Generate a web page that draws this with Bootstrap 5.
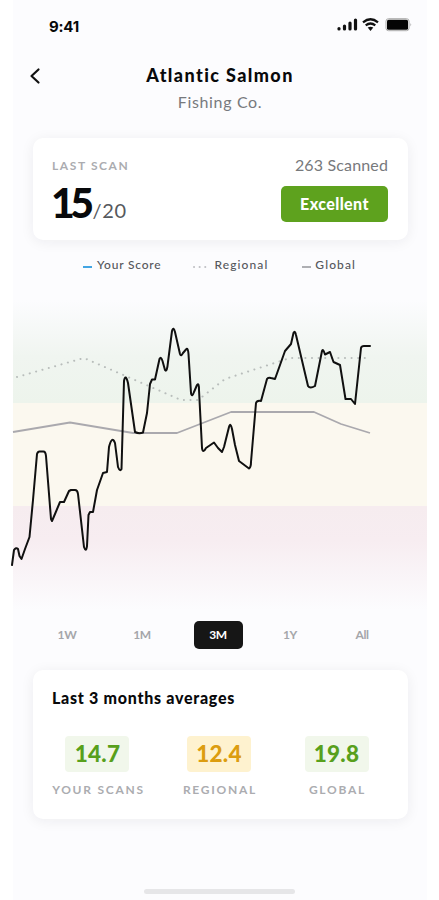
<!DOCTYPE html>
<html lang="en">
<head>
<meta charset="utf-8">
<meta name="viewport" content="width=device-width, initial-scale=1">
<title>Atlantic Salmon</title>
<link href="https://cdn.jsdelivr.net/npm/bootstrap@5.3.0/dist/css/bootstrap.min.css" rel="stylesheet">
<style>
body{font-family:Lato,"Open Sans",sans-serif;background:#fff;color:#08090b;line-height:1;overflow:hidden}
.phone{width:414px;height:900px;margin-left:13px;background:#fcfcfe}
.status{height:50px;padding:0 15px 0 36px}
.clock{font:700 15px/1 Inter,sans-serif;letter-spacing:-.2px;padding-top:2px}
.topbar{height:64px;display:grid;grid-template-columns:50px 1fr 50px}
.title{font-size:18px;line-height:20px;font-weight:900;letter-spacing:1.4px}
.company{font-size:16px;line-height:20px;color:#77797d;letter-spacing:.65px;margin-top:7px}
.heading{padding-top:15px}
.panel{background:#fff;border:0;border-radius:10px;box-shadow:0 2px 14px rgba(30,30,50,.065);margin:0 19px 0 20px}
.scan{height:102px;margin-top:24px;padding:18px 20px 0 19px}
.eyebrow{font-size:12px;line-height:20px;font-weight:700;color:#abacb0;letter-spacing:1.6px}
.score-row{margin:5px 0 0 -1px}
.score{font-size:41px;line-height:44px;font-weight:900;letter-spacing:-4.5px}
.outof{font-size:20px;line-height:24px;color:#56595d;letter-spacing:.6px;margin-left:3px}
.scanned{font-size:16px;line-height:18px;color:#77797c;letter-spacing:.15px}
.rating{width:107px;height:36px;margin-top:12px;border-radius:5px;background:#5ea21e;color:#fff;font-weight:900;font-size:16px;letter-spacing:.4px}
.legend{height:50px;padding-left:70px;font-size:12px;font-weight:500;color:#55575c;letter-spacing:.8px}
.legend-dots{margin-left:31px;letter-spacing:1.1px}
.legend-line{margin-left:34px;letter-spacing:1.1px}
.plot{display:block;margin-left:-2px;width:416px;height:320px}
.ranges{height:49px;padding-left:17px;display:grid;grid-template-columns:74px 76px 76px 68px 76px;align-items:center;justify-items:center;font-size:12px;font-weight:700;color:#a5a6aa;letter-spacing:-.4px}
.ranges .nav-link{padding:0;height:28px;width:49px;line-height:28px;color:inherit;border-radius:5px;text-align:center}
.ranges .nav-link.active{background:#161616;color:#fff}
.avg{height:149px;margin-top:11px;padding:18px 19px 0 19px}
.avg-title{font-size:16px;line-height:20px;font-weight:900;letter-spacing:.72px}
.stats{margin-top:28px;display:grid;grid-template-columns:92px 151px 84px;justify-items:center}
.pill{height:36px;width:64px;padding-top:1px;margin-left:-1px;border-radius:4px;font-size:22.5px;font-weight:900;letter-spacing:.3px}
.good{background:#f1f7eb;color:#58a01c}
.fair{background:#fef2cf;color:#dc9d10}
.cap{font-size:12px;line-height:16px;font-weight:700;color:#abacb0;letter-spacing:1.75px;margin-top:10px;margin-right:-1px;white-space:nowrap}
.homebar{width:151px;height:5px;border-radius:3px;background:#e6e6e8;margin:70px 0 0 131px}
</style>
<script src="https://cdn.jsdelivr.net/npm/bootstrap@5.3.0/dist/js/bootstrap.bundle.min.js"></script>
</head>
<body>
<main class="phone">
  <div class="status d-flex align-items-center justify-content-between">
    <span class="clock">9:41</span>
    <svg width="76" height="16" viewBox="336 17 76 16" aria-label="Signal, wifi, battery">
      <g stroke="#111" stroke-width="3.200" stroke-linecap="round"><path d="M339 28.500v.5M344.500 26v3M350 23v6M355.500 20v9"/></g>
      <g fill="none" stroke="#111" stroke-width="2.300"><path d="M363 22.300q7.500-6 15 0M365.700 25.300q4.800-3.600 9.600 0"/></g>
      <path d="M367.700 27.600q2.800-1.800 5.600 0L370.500 31z" fill="#111"/>
      <rect x="386" y="18.700" width="23" height="12" rx="2.500" fill="#fff" stroke="#aaa"/>
      <rect x="387" y="19.700" width="21" height="10" rx="1.500" fill="#050505"/>
      <path d="M410.500 23v3.500q1.500-1.700 0-3.500" fill="#999"/>
    </svg>
  </div>
  <header class="topbar">
    <svg class="mt-3" width="34" height="20" viewBox="13 66 34 20" fill="none" stroke="#111" stroke-width="2.200" stroke-linecap="round" stroke-linejoin="round"><path d="M38.500 69.500 31.500 76l7 6.500"/></svg>
    <div class="heading text-center">
      <h1 class="title m-0">Atlantic Salmon</h1>
      <div class="company">Fishing Co.</div>
    </div>
  </header>
  <section class="panel scan d-flex justify-content-between">
    <div>
      <div class="eyebrow">LAST SCAN</div>
      <div class="score-row d-flex align-items-baseline"><span class="score">15</span><span class="outof">/20</span></div>
    </div>
    <div class="d-flex flex-column align-items-end">
      <div class="scanned">263 Scanned</div>
      <div class="rating d-flex align-items-center justify-content-center">Excellent</div>
    </div>
  </section>
  <div class="legend d-flex align-items-center">
    <span><svg width="14" height="10"><path d="M0 6h9" stroke="#43a5e3" stroke-width="2"/></svg>Your Score</span>
    <span class="legend-dots"><svg width="22" height="10"><path d="M2 6h13" stroke="#c0c1c5" stroke-width="2" stroke-linecap="round" stroke-dasharray=".1 5.500"/></svg>Regional</span>
    <span class="legend-line"><svg width="13" height="10"><path d="M0 6h9" stroke="#aeafb3" stroke-width="2"/></svg>Global</span>
  </div>
  <svg class="plot" viewBox="11 290 416 320" fill="none" stroke-linejoin="round" stroke-linecap="round">
    <defs>
      <linearGradient id="top" x2="0" y2="1"><stop stop-color="#fcfcfe"/><stop offset=".55" stop-color="#f0f5f0"/><stop offset="1" stop-color="#edf4ec"/></linearGradient>
      <linearGradient id="low" x2="0" y2="1"><stop stop-color="#f6ecef"/><stop offset=".34" stop-color="#f7edf1"/><stop offset="1" stop-color="#fcfcfe"/></linearGradient>
    </defs>
    <path fill="url(#top)" d="M13 300h414v103H13z"/>
    <path fill="#fbf8ef" d="M13 403h414v103H13z"/>
    <path fill="url(#low)" d="M13 506h414v104H13z"/>
    <path stroke="#b8bdbb" stroke-width="2" stroke-dasharray=".1 6.500" d="M17 377 84 358 181 400H198L225 379 290 358H371"/>
    <path stroke="#aaa9ae" stroke-width="1.800" stroke-linecap="butt" d="M13 432 70 422.500 133 433H177L231 412H314L341 424 370 433"/>
    <path stroke="#101010" stroke-width="2" d="M12 565 14 550Q16 547 18 549L19.500 556 21.500 559 25 549 29.500 537 33 500 37 454Q38 451 40 451.500H43Q45.500 451 46 456L51 519 52 521 55 514 60 502H64L69 491 71 490H75Q77.500 490 78 494L84 547Q86 553 87 546L88.500 515 90 512H93L97 490 103 473 107 472 109 447Q112 435 115 443L118 467Q120 472 121.500 469L124 381Q125.500 373 128 383L135 432Q139 434 143 432.500L147 413 150 384 152 379.500H155L159.500 359Q161 356 162.500 361L165 370Q167 373 168 362L172 331Q173.500 326 175 332L180 354Q181 357 183 353L186 349.500Q188 347 188.500 354L191 393Q192 398 194 392L197 385Q199 382 199 390L202 448Q203 454 206 448L214 442.500 218 448 222 452 224 447 229 427Q230.500 422 232 429L235 445 239 461 249 468.500Q251 467 251 462L256 403Q257 400 261 401L267 379Q268 377 271 378L275 379 285 351 291 344 293.500 333Q295 330 296 335L308 386Q310 389 315 386L322 351Q323 348 325 354.500L330 352 333.500 362 340 365 345.500 399H351L355 404 361 348Q361.500 346 364 346H370"/>
  </svg>
  <nav class="ranges nav">
    <a class="nav-link" href="#">1W</a><a class="nav-link" href="#">1M</a><a class="nav-link active" href="#">3M</a><a class="nav-link" href="#">1Y</a><a class="nav-link" href="#">All</a>
  </nav>
  <section class="panel avg">
    <h2 class="avg-title m-0">Last 3 months averages</h2>
    <div class="stats">
      <div class="d-flex flex-column align-items-center"><div class="pill good d-flex align-items-center justify-content-center">14.7</div><div class="cap">YOUR SCANS</div></div>
      <div class="d-flex flex-column align-items-center"><div class="pill fair d-flex align-items-center justify-content-center">12.4</div><div class="cap">REGIONAL</div></div>
      <div class="d-flex flex-column align-items-center"><div class="pill good d-flex align-items-center justify-content-center">19.8</div><div class="cap">GLOBAL</div></div>
    </div>
  </section>
  <div class="homebar"></div>
</main>
</body>
</html>
